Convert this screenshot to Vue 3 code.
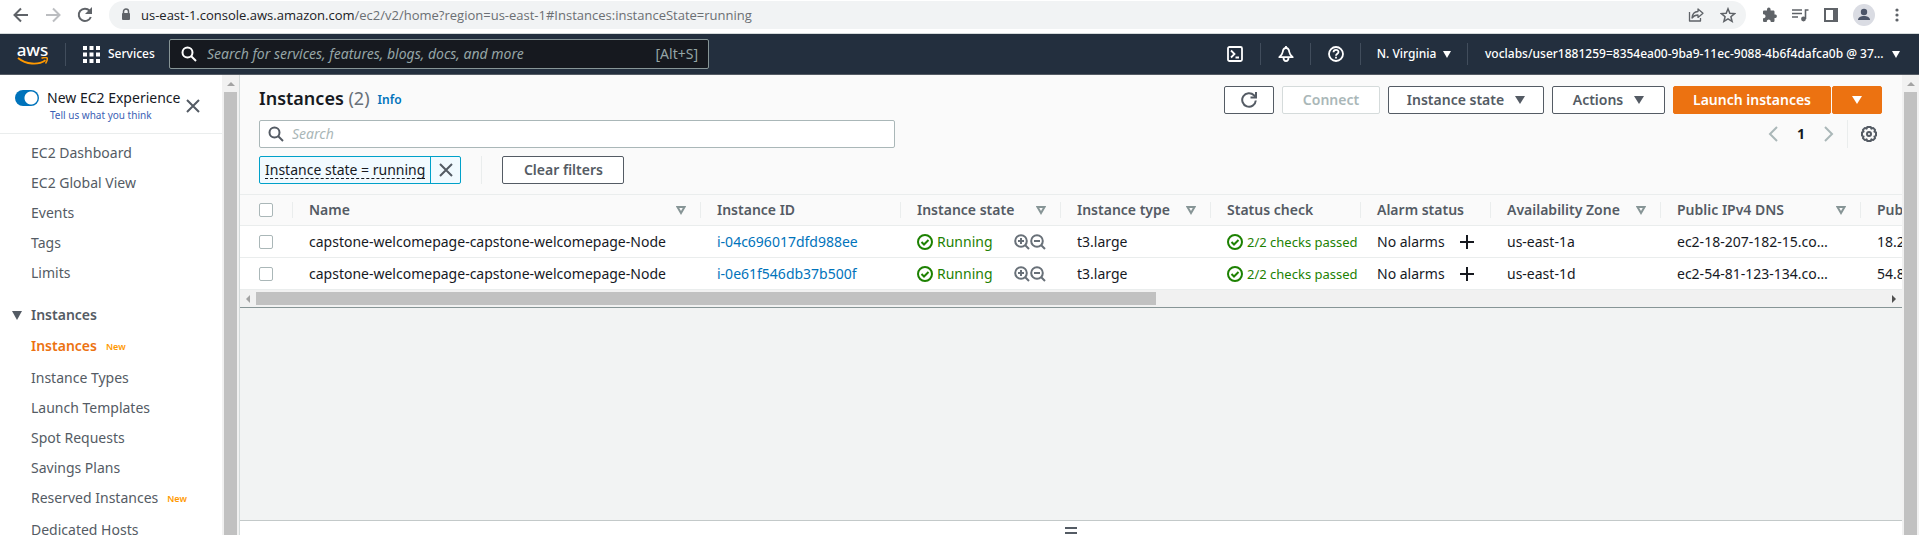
<script setup>
import { ref } from 'vue'

const navQuery = ref('')
const tableQuery = ref('')
const newExperience = ref(true)

const topLinks = ['EC2 Dashboard', 'EC2 Global View', 'Events', 'Tags', 'Limits']
const instanceLinks = [
  { label: 'Instances', isNew: true, active: true },
  { label: 'Instance Types' },
  { label: 'Launch Templates' },
  { label: 'Spot Requests' },
  { label: 'Savings Plans' },
  { label: 'Reserved Instances', isNew: true },
  { label: 'Dedicated Hosts' },
]

const columns = [
  { label: 'Name', cls: 'c-name', sort: true },
  { label: 'Instance ID', cls: 'c-id' },
  { label: 'Instance state', cls: 'c-state', sort: true },
  { label: 'Instance type', cls: 'c-type', sort: true },
  { label: 'Status check', cls: 'c-check' },
  { label: 'Alarm status', cls: 'c-alarm' },
  { label: 'Availability Zone', cls: 'c-zone', sort: true },
  { label: 'Public IPv4 DNS', cls: 'c-dns', sort: true },
  { label: 'Public IPv4 address', cls: 'c-ip' },
]

const rows = ref([
  { name: 'capstone-welcomepage-capstone-welcomepage-Node', id: 'i-04c696017dfd988ee', type: 't3.large', zone: 'us-east-1a', dns: 'ec2-18-207-182-15.co…', ip: '18.207.182.15', picked: false },
  { name: 'capstone-welcomepage-capstone-welcomepage-Node', id: 'i-0e61f546db37b500f', type: 't3.large', zone: 'us-east-1d', dns: 'ec2-54-81-123-134.co…', ip: '54.81.123.134', picked: false },
])
</script>

<template>
  <div class="shell">
    <header class="browser">
      <button class="plain" aria-label="Back">
        <svg width="16" height="16" viewBox="0 0 16 16"><path d="M15 8H2M8 1.500L1.500 8 8 14.500" fill="none" stroke="#5f6368" stroke-width="2" /></svg>
      </button>
      <button class="plain" aria-label="Forward" disabled>
        <svg width="16" height="16" viewBox="0 0 16 16"><path d="M1 8h13M8 1.500L14.500 8 8 14.500" fill="none" stroke="#bcbec1" stroke-width="2" /></svg>
      </button>
      <button class="plain" aria-label="Reload">
        <svg width="16" height="16" viewBox="0 0 16 16"><path d="M13.800 10A6.200 6.200 0 1 1 12.600 3.700L14 5.200" fill="none" stroke="#5f6368" stroke-width="2" /><path d="M15 0v7H8z" fill="#5f6368" /></svg>
      </button>
      <div class="address">
        <svg width="10" height="14" viewBox="0 0 10 14"><path d="M2.500 6V3.500a2.500 2.500 0 0 1 5 0V6" fill="none" stroke="#5f6368" stroke-width="1.500" /><rect x="1" y="5" width="8" height="7" rx="1" fill="#5f6368" /></svg>
        <p class="url"><span>us-east-1.console.aws.amazon.com</span>/ec2/v2/home?region=us-east-1#Instances:instanceState=running</p>
        <button class="plain" aria-label="Share">
          <svg width="16" height="16" viewBox="0 0 16 16"><path d="M1.500 5v9h11v-3M4 11c.3-4 2.500-6.300 6-6.500V2l5 4.200-5 4.200V8C7.500 8 5.500 9 4 11z" fill="none" stroke="#5f6368" stroke-width="1.300" stroke-linejoin="round" /></svg>
        </button>
        <button class="plain star" aria-label="Bookmark">
          <svg width="16" height="16" viewBox="0 0 16 16"><path d="M8 1.800l1.800 4.400 4.800.4-3.700 3.100 1.200 4.700L8 11.900l-4.100 2.500 1.200-4.700L1.400 6.600l4.800-.4z" fill="none" stroke="#5f6368" stroke-width="1.500" /></svg>
        </button>
      </div>
      <div class="tools">
        <button class="plain" aria-label="Extensions">
          <svg width="16" height="16" viewBox="0 0 16 16"><path d="M13.500 7.500h-1V4.800c0-.8-.6-1.300-1.300-1.300H8.600V2.400a1.800 1.800 0 0 0-3.600 0v1.100H2.300C1.600 3.500 1 4 1 4.800v2.500h1a2 2 0 0 1 0 3.900H1v2.500c0 .7.600 1.300 1.300 1.300h2.500v-1a2 2 0 0 1 3.900 0v1h2.500c.7 0 1.300-.6 1.300-1.300V11h1a1.800 1.800 0 0 0 0-3.500z" fill="#5f6368" /></svg>
        </button>
        <button class="plain" aria-label="Media controls">
          <svg width="17" height="16" viewBox="0 0 17 16"><path d="M0 3h10M0 6.500h10M0 10h6M13.500 12V3h3" fill="none" stroke="#5f6368" stroke-width="1.600" /><circle cx="11.500" cy="12" r="2.400" fill="#5f6368" /></svg>
        </button>
        <button class="plain" aria-label="Side panel">
          <svg width="16" height="16" viewBox="0 0 16 16"><path d="M2 2h12v12H2z" fill="none" stroke="#5f6368" stroke-width="2" /><path d="M10 2h5v12h-5z" fill="#5f6368" /></svg>
        </button>
        <button class="plain" aria-label="Profile">
          <svg width="22" height="22" viewBox="0 0 22 22"><circle cx="11" cy="11" r="11" fill="#dadce3" /><circle cx="11" cy="8" r="3.200" fill="#4b5468" /><path d="M5 16c0-2.600 3-4 6-4s6 1.400 6 4z" fill="#4b5468" /></svg>
        </button>
        <button class="plain" aria-label="Menu">
          <svg width="16" height="16" viewBox="0 0 16 16" fill="#5f6368"><circle cx="8" cy="3" r="1.600" /><circle cx="8" cy="8" r="1.600" /><circle cx="8" cy="13" r="1.600" /></svg>
        </button>
      </div>
    </header>

    <nav class="topnav" aria-label="Console">
      <a href="#" class="aws" aria-label="AWS home">
        <span>aws</span>
        <svg width="32" height="9" viewBox="0 0 32 9"><path d="M1 1c8 6.500 20 7.500 27.500 2.200" fill="none" stroke="#f90" stroke-width="1.900" /><path d="M24.500 1.300c2-.9 5-1 5.600-.3.600.8-.2 3.800-1.600 5.500" fill="none" stroke="#f90" stroke-width="1.500" /></svg>
      </a>
      <button class="plain services">
        <svg width="17" height="17" viewBox="0 0 17 17" fill="#fff"><path d="M0 0h4v4H0zM6.500 0h4v4h-4zM13 0h4v4h-4zM0 6.500h4v4H0zM6.500 6.500h4v4h-4zM13 6.500h4v4h-4zM0 13h4v4H0zM6.500 13h4v4h-4zM13 13h4v4h-4z" /></svg>
        Services
      </button>
      <label class="navsearch">
        <svg width="16" height="16" viewBox="0 0 16 16"><circle cx="6.500" cy="6.500" r="5" fill="none" stroke="#fff" stroke-width="2" /><path d="M10 10l5 5" stroke="#fff" stroke-width="2" /></svg>
        <input v-model="navQuery" type="text" placeholder="Search for services, features, blogs, docs, and more" aria-label="Search AWS" />
        <span>[Alt+S]</span>
      </label>
      <div class="navright">
        <button class="plain navicon" aria-label="CloudShell">
          <svg width="16" height="16" viewBox="0 0 16 16" fill="none" stroke="#fff" stroke-width="1.800"><rect x="1" y="1" width="14" height="14" rx="1.500" /><path d="M4 4.500L7.500 8 4 11.500M8.500 11.500H12" /></svg>
        </button>
        <button class="plain navicon" aria-label="Notifications">
          <svg width="16" height="16" viewBox="0 0 16 16" fill="none" stroke="#fff" stroke-width="1.800" stroke-linejoin="round"><path d="M8 2C6 2 5 3.600 4.700 6 4.400 8.200 3 9.800 1.300 11.200h13.400C13 9.800 11.600 8.200 11.300 6 11 3.600 10 2 8 2zM5.500 11.500c0 4.700 5 4.700 5 0" /><path d="M8 0v2" /></svg>
        </button>
        <button class="plain navicon" aria-label="Help">
          <svg width="16" height="16" viewBox="0 0 16 16" fill="none" stroke="#fff" stroke-width="1.800"><circle cx="8" cy="8" r="7" /><path d="M5.500 6.300C5.500 3 10.500 3.200 10.500 6c0 1.700-2.500 1.700-2.500 3.700M8 10.800v1.800" /></svg>
        </button>
        <button class="plain region">N. Virginia <svg width="8" height="7" viewBox="0 0 8 7"><path d="M0 0h8L4 7z" fill="#fff" /></svg></button>
        <button class="plain account">voclabs/user1881259=8354ea00-9ba9-11ec-9088-4b6f4dafca0b @ 37... <svg width="8" height="7" viewBox="0 0 8 7"><path d="M0 0h8L4 7z" fill="#fff" /></svg></button>
      </div>
    </nav>

    <div class="body">
      <aside class="side">
        <div class="sidehead">
          <label class="switch"><input v-model="newExperience" type="checkbox" role="switch" aria-label="New EC2 Experience" /></label>
          <div class="exp">
            <p>New EC2 Experience</p>
            <a href="#">Tell us what you think</a>
          </div>
          <button class="plain close" aria-label="Close navigation">
            <svg width="14" height="14" viewBox="0 0 14 14"><path d="M1 1l12 12M13 1L1 13" stroke="#545b64" stroke-width="2" /></svg>
          </button>
        </div>
        <ul class="links">
          <li v-for="l in topLinks" :key="l"><a href="#">{{ l }}</a></li>
        </ul>
        <button class="plain group">
          <svg width="10" height="9" viewBox="0 0 10 9"><path d="M0 0h10L5 9z" fill="#545b64" /></svg>
          Instances
        </button>
        <ul class="links sub">
          <li v-for="l in instanceLinks" :key="l.label" :class="{ active: l.active, tall: l.isNew }">
            <a href="#">{{ l.label }}</a><span v-if="l.isNew" class="new">New</span>
          </li>
        </ul>
      </aside>
      <div class="vbar edge"><i class="up"></i><div class="thumb"></div></div>

      <main class="main">
        <section class="panel">
          <div class="titlebar">
            <h1>Instances <span>(2)</span></h1>
            <a href="#" class="info">Info</a>
            <div class="actions">
              <button class="btn refresh" aria-label="Refresh">
                <svg width="16" height="16" viewBox="0 0 16 16"><path d="M14.800 8.500A6.800 6.800 0 1 1 13 3.300L14.500 5" fill="none" stroke="#545b64" stroke-width="2" /><path d="M15 0v5.500H9.500" fill="none" stroke="#545b64" stroke-width="2" /></svg>
              </button>
              <button class="btn connect" disabled>Connect</button>
              <button class="btn state">Instance state <i class="caret"></i></button>
              <button class="btn acts">Actions <i class="caret"></i></button>
              <div class="split">
                <button class="btn primary launch">Launch instances</button>
                <button class="btn primary more" aria-label="More launch options"><i class="caret"></i></button>
              </div>
            </div>
          </div>
          <div class="filterbar">
            <label class="search">
              <svg width="16" height="16" viewBox="0 0 16 16"><circle cx="6.500" cy="6.500" r="5" fill="none" stroke="#545b64" stroke-width="2" /><path d="M10 10l5 5" stroke="#545b64" stroke-width="2" /></svg>
              <input v-model="tableQuery" type="text" placeholder="Search" aria-label="Search instances" />
            </label>
            <div class="pager">
              <button class="plain" aria-label="Previous page"><svg width="10" height="16" viewBox="0 0 10 16"><path d="M9 1L2 8l7 7" fill="none" stroke="#aab7b8" stroke-width="2" /></svg></button>
              <b>1</b>
              <button class="plain" aria-label="Next page"><svg width="10" height="16" viewBox="0 0 10 16"><path d="M1 1l7 7-7 7" fill="none" stroke="#aab7b8" stroke-width="2" /></svg></button>
              <button class="plain gear" aria-label="Preferences">
                <svg width="16" height="16" viewBox="0 0 16 16" fill="none" stroke="#545b64" stroke-width="2"><path d="M6.300 1h3.400l.7 1.600 1.700-.7 2 2-.7 1.700 1.600.7v3.400l-1.600.7.700 1.700-2 2-1.700-.7-.7 1.600H6.300l-.7-1.600-1.700.7-2-2 .7-1.700L1 9.700V6.300l1.600-.7-.7-1.700 2-2 1.700.7z" stroke-linejoin="round" /><circle cx="8" cy="8" r="2" /></svg>
              </button>
            </div>
          </div>
          <div class="tokens">
            <div class="token">
              <button class="plain tlabel"><span>Instance state = running</span></button>
              <button class="plain tclose" aria-label="Remove filter"><svg width="14" height="14" viewBox="0 0 14 14"><path d="M1 1l12 12M13 1L1 13" stroke="#545b64" stroke-width="2" /></svg></button>
            </div>
            <div class="clearwrap"><button class="btn clear">Clear filters</button></div>
          </div>
          <table>
            <colgroup>
              <col class="c-pick" />
              <col v-for="c in columns" :key="c.cls" :class="c.cls" />
            </colgroup>
            <thead>
              <tr>
                <th class="pick"><input type="checkbox" aria-label="Select all" /></th>
                <th v-for="c in columns" :key="c.label">
                  <div class="cell">
                    <span>{{ c.label }}</span>
                    <svg v-if="c.sort" width="10" height="9" viewBox="0 0 10 9"><path d="M1.500 1h7L5 7z" fill="none" stroke="#879596" stroke-width="2" /></svg>
                  </div>
                </th>
              </tr>
            </thead>
            <tbody>
              <tr v-for="r in rows" :key="r.id">
                <td class="pick"><input v-model="r.picked" type="checkbox" :aria-label="'Select ' + r.id" /></td>
                <td>{{ r.name }}</td>
                <td><a href="#">{{ r.id }}</a></td>
                <td>
                  <div class="cell">
                    <span class="ok"><svg width="16" height="16" viewBox="0 0 16 16" fill="none" stroke="#1d8102" stroke-width="2"><circle cx="8" cy="8" r="7" /><path d="M4.500 8l2.500 2.500L11.500 6" /></svg>Running</span>
                    <span class="lenses">
                      <button class="plain" aria-label="Filter in"><svg width="16" height="16" viewBox="0 0 16 16" fill="none" stroke="#687078" stroke-width="2"><circle cx="7" cy="7" r="5.800" /><path d="M11 11l4 4M4 7h6M7 4v6" /></svg></button>
                      <button class="plain" aria-label="Filter out"><svg width="16" height="16" viewBox="0 0 16 16" fill="none" stroke="#687078" stroke-width="2"><circle cx="7" cy="7" r="5.800" /><path d="M11 11l4 4M4 7h6" /></svg></button>
                    </span>
                  </div>
                </td>
                <td>{{ r.type }}</td>
                <td class="checks"><span class="ok"><svg width="16" height="16" viewBox="0 0 16 16" fill="none" stroke="#1d8102" stroke-width="2"><circle cx="8" cy="8" r="7" /><path d="M4.500 8l2.500 2.500L11.500 6" /></svg>2/2 checks passed</span></td>
                <td>
                  <div class="cell alarm">
                    <span>No alarms</span>
                    <button class="plain" aria-label="Add alarm"><svg width="14" height="14" viewBox="0 0 14 14"><path d="M7 0v14M0 7h14" stroke="#16191f" stroke-width="2" /></svg></button>
                  </div>
                </td>
                <td>{{ r.zone }}</td>
                <td>{{ r.dns }}</td>
                <td>{{ r.ip }}</td>
              </tr>
            </tbody>
          </table>
          <div class="hbar"><i class="left"></i><div class="track"><div class="hthumb"></div></div><i class="right"></i></div>
        </section>
        <section class="drawer">
          <button class="plain" aria-label="Resize panel"><svg width="12" height="7" viewBox="0 0 12 7"><path d="M0 1h12M0 6h12" stroke="#545b64" stroke-width="2" /></svg></button>
        </section>
      </main>
      <div class="vbar"><i class="up"></i><div class="thumb"></div></div>
    </div>
  </div>
</template>

<style>
body {
  margin: 0;
}
</style>

<style scoped>
* {
  box-sizing: border-box;
}
.shell {
  display: flex;
  flex-direction: column;
  height: 100vh;
  overflow: hidden;
  font-family: "Noto Sans", sans-serif;
  font-size: 14px;
  line-height: 20px;
  color: #16191f;
}
button,
input {
  font: inherit;
  color: inherit;
}
p,
h1,
ul {
  margin: 0;
  padding: 0;
  list-style: none;
}
a {
  color: #0073bb;
  text-decoration: none;
}
svg {
  display: block;
  flex: none;
}
.plain {
  display: flex;
  align-items: center;
  justify-content: center;
  padding: 0;
  border: 0;
  background: none;
}

/* browser toolbar */
.browser {
  display: flex;
  align-items: center;
  flex: none;
  gap: 16px;
  height: 34px;
  padding: 0 14px 4px 13px;
  background: #fff;
  border-bottom: 1px solid #d5dbdb;
}
.address {
  display: flex;
  flex: 1;
  align-items: center;
  gap: 10px;
  height: 28px;
  margin-top: 1px;
  padding: 0 10px 0 12px;
  border-radius: 14px;
  background: #f1f3f4;
}
.star {
  margin-left: 6px;
}
.browser > .plain {
  width: 16px;
}
.url {
  flex: 1;
  font-family: "Open Sans", sans-serif;
  font-size: 13px;
  color: #6b6f73;
  white-space: nowrap;
}
.url span {
  color: #202124;
}
.tools {
  display: flex;
  align-items: center;
  gap: 14px;
}

/* console navigation */
.topnav {
  display: flex;
  align-items: center;
  flex: none;
  height: 41px;
  background: #232f3e;
  border-bottom: 1px solid #545b64;
  color: #fff;
  font-size: 12px;
  font-weight: 500;
}
.aws {
  display: flex;
  flex-direction: column;
  align-items: center;
  width: 66px;
  border-right: 1px solid #414d5c;
  color: #fff;
  font-size: 17px;
  line-height: 14px;
}
.services {
  gap: 8px;
  width: 103px;
  padding-left: 17px;
  justify-content: flex-start;
}
.navsearch {
  display: flex;
  align-items: center;
  gap: 10px;
  width: 540px;
  height: 30px;
  padding: 0 10px 0 11px;
  border: 1px solid #879596;
  border-radius: 2px;
  background: #16191f;
  color: #95a5a6;
  font-size: 14px;
  font-weight: 400;
}
.navsearch input,
.search input {
  flex: 1;
  min-width: 0;
  padding: 0;
  border: 0;
  outline: 0;
  background: none;
}
.navsearch input::placeholder {
  color: #95a5a6;
  font-style: italic;
}
.navright {
  display: flex;
  align-items: center;
  margin-left: auto;
  padding-right: 19px;
}
.navright .plain {
  height: 22px;
}
.navright .plain + .plain {
  border-left: 1px solid #414d5c;
}
.navicon {
  width: 50px;
}
.region {
  gap: 7px;
  width: 107px;
}
.account {
  justify-content: space-between;
  min-width: 433px;
  padding-left: 17px;
  gap: 7px;
}

/* side navigation */
.body {
  display: flex;
  flex: 1;
  min-height: 0;
}
.side {
  flex: none;
  width: 222px;
  overflow: hidden;
  color: #545b64;
}
.sidehead {
  display: flex;
  height: 59px;
  padding: 13px 22px 0 15px;
  border-bottom: 1px solid #eaeded;
}
.switch input {
  display: block;
  width: 24px;
  height: 16px;
  margin: 2px 0 0;
  border-radius: 8px;
  appearance: none;
  background: radial-gradient(circle at 16px 8px, #fff 6px, #0073bb 7px);
}
.exp {
  flex: 1;
  padding-left: 8px;
  color: #16191f;
  white-space: nowrap;
}
.exp a {
  display: block;
  padding-left: 3px;
  color: #3b5fb5;
  font-size: 10px;
  line-height: 14px;
}
.close {
  height: 36px;
}
.links {
  padding: 4px 0 0 31px;
}
.links li {
  display: flex;
  align-items: center;
  height: 30px;
}
.links a {
  color: #545b64;
}
.group {
  gap: 9px;
  margin-top: 17px;
  padding-left: 12px;
  font-weight: 600;
}
.links.sub {
  padding-top: 6px;
}
.links .tall {
  height: 32px;
  padding-bottom: 2px;
}
.links .active a {
  color: #ec7211;
  font-weight: 600;
}
.new {
  padding: 2px 0 0 9px;
  color: #ff9900;
  font-size: 9px;
  font-weight: 600;
}

/* scroll bars */
.vbar {
  display: flex;
  flex-direction: column;
  align-items: center;
  flex: none;
  width: 17px;
  background: #f1f1f1;
}
.edge {
  width: 18px;
  border-right: 1px solid #d5dbdb;
}
.up {
  margin: 7px 0 6px;
  border: 4px solid transparent;
  border-top: 0;
  border-bottom-color: #a3a3a3;
}
.thumb {
  flex: 1;
  width: 13px;
  background: #c1c1c1;
}
.hbar {
  display: flex;
  align-items: center;
  height: 18px;
  padding: 0 6px;
  background: #f1f1f1;
  border-bottom: 1px solid #879596;
}
.left,
.right {
  border: 4px solid transparent;
}
.left {
  border-left: 0;
  border-right-color: #a3a3a3;
}
.right {
  border-right: 0;
  border-left-color: #505050;
}
.track {
  flex: 1;
  margin: 0 0 0 6px;
}
.hthumb {
  width: 55%;
  height: 13px;
  background: #c1c1c1;
}

/* instances panel */
.main {
  display: flex;
  flex: 1;
  flex-direction: column;
  min-width: 0;
  background: #f2f3f3;
}
.panel {
  background: #fafafa;
}
.titlebar {
  display: flex;
  align-items: flex-start;
  padding: 11px 20px 0 19px;
}
h1 {
  font-size: 18px;
  line-height: 24px;
  font-weight: 600;
}
h1 span {
  color: #687078;
  font-weight: 400;
}
.info {
  padding: 4px 0 0 8px;
  font-size: 12px;
  font-weight: 600;
}
.actions {
  display: flex;
  gap: 8px;
  margin-left: auto;
}
.btn {
  display: flex;
  align-items: center;
  justify-content: center;
  gap: 11px;
  height: 28px;
  padding: 0;
  border: 1px solid #545b64;
  border-radius: 2px;
  background: #fff;
  color: #545b64;
  font-weight: 600;
  white-space: nowrap;
}
.btn:disabled {
  border-color: #d5dbdb;
  color: #aab7b8;
}
.refresh {
  width: 50px;
}
.connect {
  width: 98px;
}
.state {
  width: 156px;
}
.acts {
  width: 113px;
}
.clear {
  width: 122px;
}
.split {
  display: flex;
  gap: 1px;
}
.btn.primary {
  border-color: #ec7211;
  background: #ec7211;
  color: #fff;
}
.launch {
  width: 158px;
}
.more {
  width: 50px;
}
.caret {
  border: 5px solid transparent;
  border-top: 8px solid currentColor;
  border-bottom: 0;
}
.filterbar {
  display: flex;
  align-items: center;
  justify-content: space-between;
  padding: 6px 20px 0 19px;
}
.search {
  display: flex;
  align-items: center;
  gap: 8px;
  width: 636px;
  height: 28px;
  padding: 0 8px;
  border: 1px solid #aab7b8;
  border-radius: 2px;
  background: #fff;
}
.search input::placeholder {
  color: #aab7b8;
  font-style: italic;
}
.pager {
  display: flex;
  align-items: center;
  gap: 19px;
}
.gear {
  height: 28px;
  margin-left: -6px;
  padding: 0 5px 0 13px;
  border-left: 1px solid #eaeded;
}
.tokens {
  display: flex;
  padding: 8px 19px 10px;
}
.token {
  display: flex;
  height: 28px;
  border: 1px solid #00a1c9;
  border-radius: 2px;
  background: #f1faff;
}
.tlabel {
  padding: 0 5px;
}
.tlabel span {
  line-height: 17px;
  border-bottom: 1px dashed #16191f;
}
.tclose {
  width: 30px;
  border-left: 1px solid #00a1c9;
}
.clearwrap {
  margin-left: 20px;
  padding-left: 20px;
  border-left: 1px solid #eaeded;
}

/* table */
table {
  width: 100%;
  border-collapse: collapse;
  table-layout: fixed;
  border-top: 1px solid #eaeded;
}
.c-pick {
  width: 52px;
}
.c-name {
  width: 408px;
}
.c-id,
.c-dns {
  width: 200px;
}
.c-state {
  width: 160px;
}
.c-type,
.c-check {
  width: 150px;
}
.c-alarm {
  width: 130px;
}
.c-zone {
  width: 170px;
}
th,
td {
  height: 32px;
  padding: 0 0 0 17px;
  border-bottom: 1px solid #eaeded;
  overflow: hidden;
  text-align: left;
  white-space: nowrap;
}
th {
  height: 31px;
  color: #545b64;
  font-weight: 600;
  background: linear-gradient(#eaeded, #eaeded) 0 50% / 1px 16px no-repeat;
}
th.pick {
  background: none;
}
.pick {
  padding-left: 19px;
}
.pick input {
  display: block;
  width: 14px;
  height: 14px;
  margin: 0;
  border: 1px solid #aab7b8;
  border-radius: 2px;
  appearance: none;
  background: #fff;
}
tbody {
  background: #fff;
}
.cell {
  display: flex;
  align-items: center;
  justify-content: space-between;
  padding-right: 14px;
}
.alarm {
  padding-right: 16px;
}
.ok {
  display: flex;
  align-items: center;
  gap: 4px;
  color: #1d8102;
}
.checks {
  font-size: 13px;
}
.lenses {
  display: flex;
}
.drawer {
  display: flex;
  justify-content: center;
  height: 15px;
  margin-top: auto;
  padding-top: 6px;
  border-top: 1px solid #c3c9c9;
  background: #fff;
}
.drawer .plain {
  height: 7px;
}
</style>
